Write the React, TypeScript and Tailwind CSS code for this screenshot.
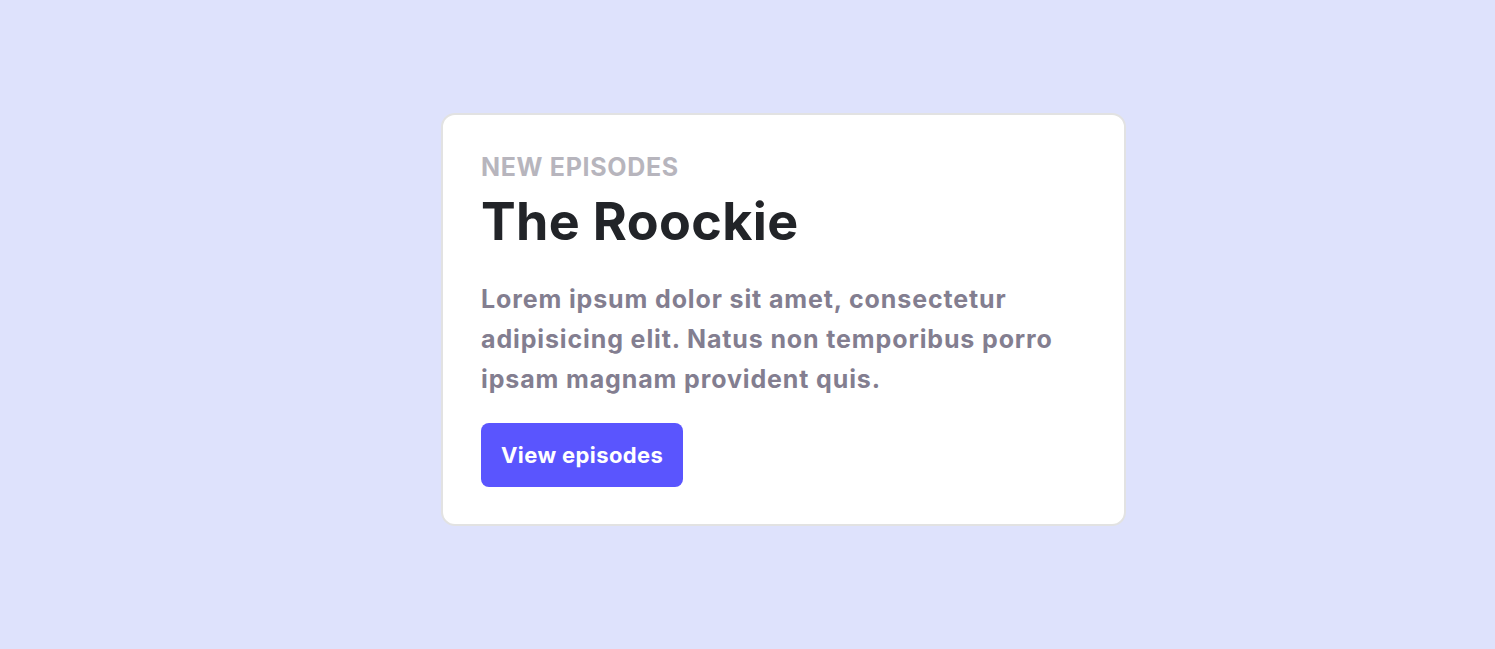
export default function App() {
  return (
    <div className="min-h-screen w-full bg-[#dee2fc] flex items-center justify-center pl-[72px] pb-[10px] font-['Inter','Noto_Sans',sans-serif]">
      <div className="w-[685px] rounded-[14px] border-2 border-[#e2e2e2] bg-white px-[38px] pt-[38px] pb-[37px]">
        <p className="text-[25px] leading-[28px] font-bold uppercase tracking-[0.027em] text-[#b7b5bd]">New episodes</p>
        <h1 className="mt-[9px] text-[52px] leading-[64px] font-bold tracking-[0.007em] text-[#222428]">The Roockie</h1>
        <p className="mt-[25px] text-[25px] leading-[40px] font-bold tracking-[0.035em] text-[#837e90]">
          Lorem ipsum dolor sit amet, consectetur adipisicing elit. Natus non temporibus porro ipsam magnam provident quis.
        </p>
        <button className="mt-[24px] h-[64px] rounded-[8px] bg-[#5a55fe] px-[20px] text-[22px] font-bold tracking-[0.018em] text-white">
          View episodes
        </button>
      </div>
    </div>
  );
}
